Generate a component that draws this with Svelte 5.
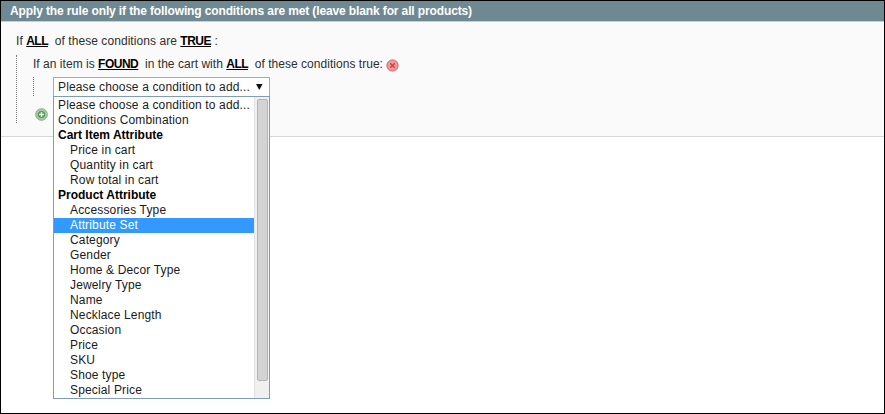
<script lang="ts">
  const options = [
    { label: 'Please choose a condition to add...' },
    { label: 'Conditions Combination' },
    { label: 'Cart Item Attribute', group: true },
    { label: 'Price in cart', sub: true },
    { label: 'Quantity in cart', sub: true },
    { label: 'Row total in cart', sub: true },
    { label: 'Product Attribute', group: true },
    { label: 'Accessories Type', sub: true },
    { label: 'Attribute Set', sub: true, selected: true },
    { label: 'Category', sub: true },
    { label: 'Gender', sub: true },
    { label: 'Home & Decor Type', sub: true },
    { label: 'Jewelry Type', sub: true },
    { label: 'Name', sub: true },
    { label: 'Necklace Length', sub: true },
    { label: 'Occasion', sub: true },
    { label: 'Price', sub: true },
    { label: 'SKU', sub: true },
    { label: 'Shoe type', sub: true },
    { label: 'Special Price', sub: true },
  ];
</script>

<div class="frame">
  <div class="head">Apply the rule only if the following conditions are met (leave blank for all products)</div>
  <div class="panel">
    <div class="line top">If <b>ALL</b>&nbsp; of these conditions are <b>TRUE</b> :</div>
    <div class="tree">
      <div class="line second">
        If an item is <b>FOUND</b>&nbsp; in the cart with <b>ALL</b>&nbsp; of these conditions true:
        <svg class="icon" width="13" height="13" viewBox="0 0 13 13">
          <circle cx="6.5" cy="6.5" r="5.6" fill="#f29a9a" stroke="#d0605f" />
          <path d="M4.2 4.2l4.6 4.6M8.8 4.2l-4.6 4.6" stroke="#d8403f" stroke-width="1.5" />
        </svg>
      </div>
      <div class="sub">
        <div class="select">
          <span>Please choose a condition to add...</span>
          <svg width="7" height="6" viewBox="0 0 7 6"><path d="M0 0h6.6L3.3 6z" fill="#111" /></svg>
        </div>
        <div class="dropdown">
          <div class="list">
            {#each options as o}
              <div class="opt" class:group={o.group} class:indent={o.sub} class:selected={o.selected}>{o.label}</div>
            {/each}
          </div>
          <div class="scroll"><div class="thumb"></div></div>
        </div>
      </div>
      <svg class="add" width="13" height="13" viewBox="0 0 13 13">
        <circle cx="6.5" cy="6.5" r="5.8" fill="#a9c9a6" stroke="#8aa88a" />
        <circle cx="6.5" cy="6.5" r="3.6" fill="#4f9a52" />
        <path d="M6.5 4v5M4 6.5h5" stroke="#e8f4e8" stroke-width="1.4" />
      </svg>
    </div>
  </div>
</div>

<style>
  :global(body) {
    background: #fff;
  }

  .frame {
    box-sizing: border-box;
    width: 885px;
    height: 414px;
    border: 1px solid #000;
    font-family: 'Liberation Sans', Arial, sans-serif;
    font-size: 12px;
    color: #2f2f2f;
  }

  .head {
    height: 21px;
    padding-left: 9px;
    background: #6f8992;
    color: #fff;
    font-weight: bold;
    letter-spacing: -0.125px;
    line-height: 20px;
    border-bottom: 1px solid #c8cfd1;
    box-sizing: border-box;
  }

  .panel {
    box-sizing: border-box;
    height: 115px;
    padding: 11px 0 0 15px;
    background: #fafafa;
    border-bottom: 1px solid #d6d6d6;
  }

  .line {
    height: 16px;
    line-height: 16px;
    white-space: nowrap;
  }

  .line b {
    color: #000;
    letter-spacing: -0.5px;
    text-decoration: underline;
  }

  .top {
    letter-spacing: 0.06px;
  }

  .second {
    padding-top: 1px;
    letter-spacing: 0.03px;
  }

  .tree {
    box-sizing: border-box;
    position: relative;
    width: 600px;
    height: 68px;
    margin-top: 6px;
    padding-left: 16px;
    border-left: 1px dotted #777;
  }

  .icon {
    vertical-align: -4px;
  }

  .sub {
    position: relative;
    margin: 5px 0 0 0;
    padding-left: 20px;
    letter-spacing: 0.15px;
  }

  .sub::before {
    content: '';
    position: absolute;
    left: 0;
    top: 0;
    height: 19px;
    border-left: 1px dotted #777;
  }

  .select {
    box-sizing: border-box;
    display: flex;
    align-items: center;
    justify-content: space-between;
    width: 217px;
    height: 20px;
    padding: 0 6px 0 4px;
    background: #fff;
    border: 1px solid #aaa;
    color: #222;
  }

  .dropdown {
    box-sizing: border-box;
    position: absolute;
    z-index: 2;
    top: 19px;
    left: 20px;
    display: flex;
    width: 217px;
    height: 303px;
    background: #fff;
    border: 1px solid #7f9db9;
    overflow: hidden;
  }

  .list {
    flex: 1;
    padding-top: 1px;
  }

  .opt {
    height: 15px;
    line-height: 15px;
    padding-left: 4px;
    color: #1a1a1a;
    white-space: nowrap;
  }

  .indent {
    padding-left: 16px;
  }

  .group {
    font-weight: bold;
    color: #000;
    letter-spacing: 0;
  }

  .selected {
    background: #3399ff;
    color: #fff;
  }

  .scroll {
    box-sizing: border-box;
    width: 15px;
    padding: 2px 1px 0 2px;
    background: #f0f0f0;
    border-left: 1px solid #e3e3e3;
  }

  .thumb {
    box-sizing: border-box;
    height: 282px;
    background: #d3d3d3;
    border: 1px solid #b5b5b5;
    border-radius: 2px;
  }

  .add {
    position: absolute;
    left: 18px;
    top: 53px;
  }
</style>
